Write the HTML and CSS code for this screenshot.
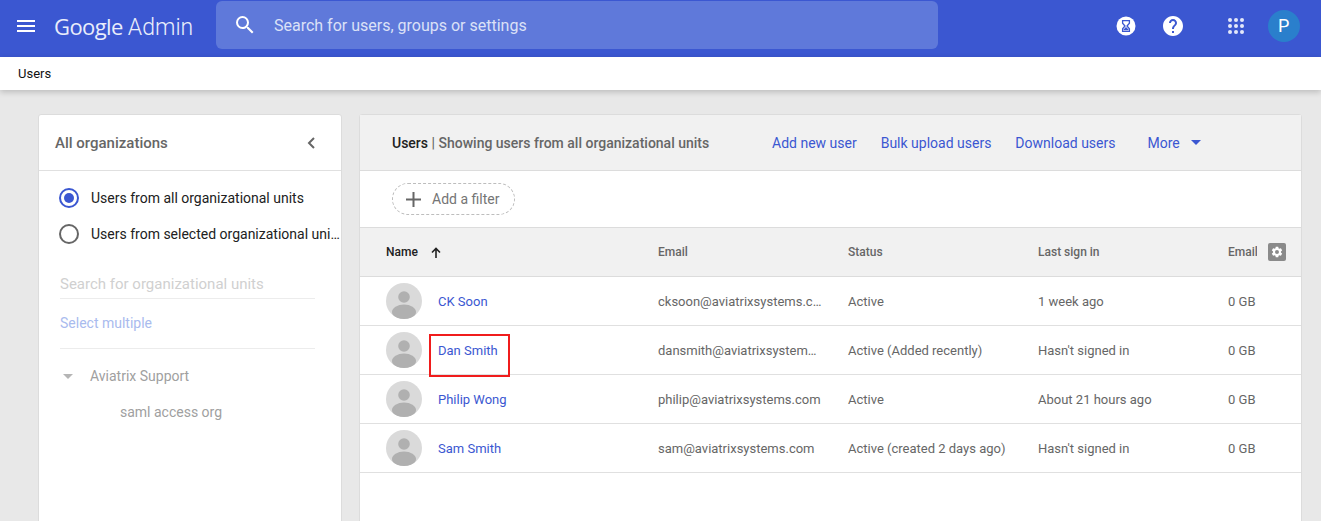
FILE: index.html
```html
<!DOCTYPE html>
<html>
<head>
    <title>Users - Admin</title>
    <link rel="stylesheet" href="styles.css">
</head>
<body>
    <header class="topbar">
        <svg class="menu-icon" viewBox="0 0 18 12" width="18" height="12"><path d="M0 0h18v2H0zM0 5h18v2H0zM0 10h18v2H0z" fill="#fff"/></svg>
        <div class="logo"><span class="logo-google">Google</span> <span class="logo-admin">Admin</span></div>
        <div class="search">
            <svg class="search-icon" viewBox="0 0 24 24" width="24" height="24"><path d="M15.5 14h-.79l-.28-.27A6.47 6.47 0 0 0 16 9.5 6.5 6.5 0 1 0 9.5 16c1.61 0 3.09-.59 4.23-1.57l.27.28v.79l5 4.99L20.49 19l-4.99-5zm-6 0C7.01 14 5 11.99 5 9.5S7.01 5 9.5 5 14 7.01 14 9.5 11.99 14 9.5 14z" fill="#fff"/></svg>
            <span class="search-text">Search for users, groups or settings</span>
        </div>
        <div class="top-icons">
            <svg class="icon-timer" viewBox="0 0 20 20" width="20" height="20"><circle cx="10" cy="10" r="9.5" fill="#fff"/><path d="M6.6 4.6h6.8v2.6L11 10l2.4 2.8v2.6H6.6v-2.6L9 10 6.6 7.2z" fill="none" stroke="#3b57d1" stroke-width="1.3"/><path d="M7.8 14.3h4.4v-1L10 11l-2.2 2.3z" fill="#3b57d1"/></svg>
            <svg class="icon-help" viewBox="0 0 24 24" width="24" height="24"><path d="M12 2C6.48 2 2 6.48 2 12s4.48 10 10 10 10-4.48 10-10S17.52 2 12 2zm1 17h-2v-2h2v2zm2.07-7.75l-.9.92C13.45 12.9 13 13.5 13 15h-2v-.5c0-1.1.45-2.1 1.17-2.83l1.24-1.26c.37-.36.59-.86.59-1.41 0-1.1-.9-2-2-2s-2 .9-2 2H8c0-2.21 1.79-4 4-4s4 1.79 4 4c0 .88-.36 1.68-.93 2.25z" fill="#fff"/></svg>
            <svg class="icon-apps" viewBox="0 0 16 16" width="16" height="16" fill="#e3e8fa"><circle cx="2" cy="2" r="2"/><circle cx="8" cy="2" r="2"/><circle cx="14" cy="2" r="2"/><circle cx="2" cy="8" r="2"/><circle cx="8" cy="8" r="2"/><circle cx="14" cy="8" r="2"/><circle cx="2" cy="14" r="2"/><circle cx="8" cy="14" r="2"/><circle cx="14" cy="14" r="2"/></svg>
            <div class="avatar-top">P</div>
        </div>
    </header>

    <div class="subbar">Users</div>

    <div class="content">
        <aside class="sidebar">
            <div class="sidebar-head">
                <span>All organizations</span>
                <svg viewBox="0 0 8 12" width="8" height="12"><path d="M7 1L2 6l5 5" fill="none" stroke="#666" stroke-width="2"/></svg>
            </div>
            <div class="sidebar-body">
                <div class="radio-row"><span class="radio radio-on"></span><span class="radio-label">Users from all organizational units</span></div>
                <div class="radio-row"><span class="radio"></span><span class="radio-label">Users from selected organizational units</span></div>
                <div class="org-search">Search for organizational units</div>
                <div class="select-multiple">Select multiple</div>
                <div class="org-item"><span class="org-arrow"></span>Aviatrix Support</div>
                <div class="org-child">saml access org</div>
            </div>
        </aside>

        <main class="panel">
            <div class="panel-head">
                <div class="panel-title"><b>Users</b> | Showing users from all organizational units</div>
                <a class="action">Add new user</a>
                <a class="action">Bulk upload users</a>
                <a class="action">Download users</a>
                <a class="action action-more">More<span class="more-arrow"></span></a>
            </div>
            <div class="filter-row">
                <div class="filter-chip">
                    <svg viewBox="0 0 15 15" width="15" height="15"><path d="M6.5 0h2v6.5H15v2H8.5V15h-2V8.5H0v-2h6.5z" fill="#666"/></svg>
                    <span>Add a filter</span>
                </div>
            </div>
            <table class="users">
                <thead>
                    <tr>
                        <th class="col-name">
                            <span class="name-head">Name</span>
                            <svg viewBox="0 0 12 12" width="12" height="12"><path d="M6 11V2M2 5.5L6 1.5l4 4" fill="none" stroke="#222" stroke-width="1.6"/></svg>
                        </th>
                        <th class="col-email">Email</th>
                        <th class="col-status">Status</th>
                        <th class="col-signin">Last sign in</th>
                        <th class="col-usage">
                            <div class="usage-head">
                                <span class="usage-label">Email</span>
                                <svg class="gear" viewBox="0 0 18 18" width="18" height="18"><rect width="18" height="18" rx="2" fill="#8a8a8a"/><path transform="translate(2.4 2.4) scale(.55)" d="M19.14 12.94c.04-.3.06-.61.06-.94 0-.32-.02-.64-.07-.94l2.03-1.58a.49.49 0 0 0 .12-.61l-1.92-3.32a.49.49 0 0 0-.59-.22l-2.39.96c-.5-.38-1.03-.7-1.62-.94l-.36-2.54a.48.48 0 0 0-.48-.41h-3.84c-.24 0-.43.17-.47.41l-.36 2.54c-.59.24-1.13.57-1.62.94l-2.39-.96c-.22-.08-.47 0-.59.22L2.74 8.87c-.12.21-.08.47.12.61l2.03 1.58c-.05.3-.09.63-.09.94s.02.64.07.94l-2.03 1.58a.49.49 0 0 0-.12.61l1.92 3.32c.12.22.37.29.59.22l2.39-.96c.5.38 1.03.7 1.62.94l.36 2.54c.05.24.24.41.48.41h3.84c.24 0 .44-.17.47-.41l.36-2.54c.59-.24 1.13-.56 1.62-.94l2.39.96c.22.08.47 0 .59-.22l1.92-3.32c.12-.22.07-.47-.12-.61l-2.01-1.58zM12 15.6A3.6 3.6 0 1 1 12 8.4a3.6 3.6 0 0 1 0 7.2z" fill="#fff"/></svg>
                            </div>
                        </th>
                    </tr>
                </thead>
                <tbody>
                    <tr>
                        <td class="col-name"><div class="user"><svg class="user-pic" viewBox="0 0 36 36" width="36" height="36"><defs><clipPath id="round"><circle cx="18" cy="18" r="18"/></clipPath></defs><circle cx="18" cy="18" r="18" fill="#dadada"/><circle cx="18" cy="14" r="5.8" fill="#b0b0b0"/><ellipse cx="18" cy="29" rx="12" ry="7.5" fill="#b0b0b0" clip-path="url(#round)"/></svg><a class="user-link">CK Soon</a></div></td>
                        <td><div class="clip">cksoon@aviatrixsystems.com</div></td>
                        <td>Active</td>
                        <td>1 week ago</td>
                        <td>0 GB</td>
                    </tr>
                    <tr>
                        <td class="col-name"><div class="user"><svg class="user-pic" viewBox="0 0 36 36" width="36" height="36"><circle cx="18" cy="18" r="18" fill="#dadada"/><circle cx="18" cy="14" r="5.8" fill="#b0b0b0"/><ellipse cx="18" cy="29" rx="12" ry="7.5" fill="#b0b0b0" clip-path="url(#round)"/></svg><a class="user-link">Dan Smith</a><span class="red-box"></span></div></td>
                        <td><div class="clip">dansmith@aviatrixsystems.com</div></td>
                        <td>Active (Added recently)</td>
                        <td>Hasn't signed in</td>
                        <td>0 GB</td>
                    </tr>
                    <tr>
                        <td class="col-name"><div class="user"><svg class="user-pic" viewBox="0 0 36 36" width="36" height="36"><circle cx="18" cy="18" r="18" fill="#dadada"/><circle cx="18" cy="14" r="5.8" fill="#b0b0b0"/><ellipse cx="18" cy="29" rx="12" ry="7.5" fill="#b0b0b0" clip-path="url(#round)"/></svg><a class="user-link">Philip Wong</a></div></td>
                        <td><div class="clip">philip@aviatrixsystems.com</div></td>
                        <td>Active</td>
                        <td>About 21 hours ago</td>
                        <td>0 GB</td>
                    </tr>
                    <tr>
                        <td class="col-name"><div class="user"><svg class="user-pic" viewBox="0 0 36 36" width="36" height="36"><circle cx="18" cy="18" r="18" fill="#dadada"/><circle cx="18" cy="14" r="5.8" fill="#b0b0b0"/><ellipse cx="18" cy="29" rx="12" ry="7.5" fill="#b0b0b0" clip-path="url(#round)"/></svg><a class="user-link">Sam Smith</a></div></td>
                        <td><div class="clip">sam@aviatrixsystems.com</div></td>
                        <td>Active (created 2 days ago)</td>
                        <td>Hasn't signed in</td>
                        <td>0 GB</td>
                    </tr>
                </tbody>
            </table>
        </main>
    </div>
</body>
</html>
```

FILE: styles.css
```css
html, body {
    height: 521px;
    overflow: hidden;
}

body {
    margin: 0;
    background-color: #e8e8e8;
    font-family: Roboto, "Liberation Sans", sans-serif;
    font-size: 13px;
    color: #212121;
}

.topbar {
    height: 57px;
    background-color: #3b57d1;
    display: flex;
    align-items: center;
    padding-left: 17px;
    overflow: hidden;
}

.menu-icon {
    flex: none;
    margin-top: -6px;
}

.logo {
    margin-left: 19px;
    width: 162px;
    margin-top: -6px;
    font-family: "Open Sans", sans-serif;
    font-size: 22px;
    color: #e9edfb;
    white-space: nowrap;
    letter-spacing: -0.6px;
}

.logo-admin {
    font-family: Roboto, sans-serif;
    font-weight: 300;
    letter-spacing: 0;
    font-size: 23px;
}

.search {
    width: 722px;
    height: 48px;
    margin-top: -7px;
    background-color: #5f79da;
    border-radius: 6px;
    display: flex;
    align-items: center;
    padding-left: 17px;
    box-sizing: border-box;
}

.search-text {
    margin-left: 17px;
    font-size: 16px;
    color: #dbe1f7;
}

.top-icons {
    margin-left: 178px;
    display: flex;
    align-items: center;
    margin-top: -6px;
}

.icon-help {
    margin-left: 25px;
}

.icon-apps {
    margin-left: 43px;
}

.avatar-top {
    flex: none;
    width: 32px;
    height: 32px;
    margin-left: 24px;
    border-radius: 50%;
    background-color: #2a7fcc;
    color: #fff;
    font-size: 18px;
    line-height: 32px;
    padding-left: 10px;
    box-sizing: border-box;
}

.subbar {
    height: 33px;
    line-height: 33px;
    background-color: #fff;
    padding-left: 18px;
    color: #111;
    box-shadow: 0 2px 6px rgba(0, 0, 0, 0.2);
    position: relative;
}

.content {
    display: flex;
    align-items: flex-start;
    gap: 17px;
    padding: 24px 19px 0 38px;
}

.sidebar {
    width: 304px;
    height: 420px;
    flex: none;
    background-color: #fff;
    border: 1px solid #dcdcdc;
    border-radius: 3px;
    box-sizing: border-box;
}

.sidebar-head {
    height: 56px;
    padding: 0 26px 0 16px;
    display: flex;
    align-items: center;
    justify-content: space-between;
    border-bottom: 1px solid #e0e0e0;
    font-size: 15px;
    font-weight: 500;
    color: #666;
    box-sizing: border-box;
}

.sidebar-body {
    padding: 9px 0 0 20px;
}

.radio-row {
    height: 36px;
    display: flex;
    align-items: center;
}

.radio {
    width: 20px;
    height: 20px;
    flex: none;
    border: 2px solid #666;
    border-radius: 50%;
    box-sizing: border-box;
    position: relative;
}

.radio-on {
    border-color: #3b57d1;
}

.radio-on::after {
    content: "";
    position: absolute;
    top: 3px;
    left: 3px;
    width: 10px;
    height: 10px;
    border-radius: 50%;
    background-color: #3b57d1;
}

.radio-label {
    margin-left: 12px;
    width: 250px;
    white-space: nowrap;
    overflow: hidden;
    text-overflow: ellipsis;
    font-size: 14px;
    color: #212121;
}

.org-search {
    width: 255px;
    margin: 22px 0 0 1px;
    padding-bottom: 4px;
    border-bottom: 1px solid #ececec;
    font-size: 15px;
    line-height: 20px;
    color: #d0d0d0;
}

.select-multiple {
    width: 255px;
    margin-left: 1px;
    padding: 16px 0 17px;
    border-bottom: 1px solid #ececec;
    font-size: 14px;
    line-height: 16px;
    color: #a9bbee;
}

.org-item {
    display: flex;
    align-items: center;
    margin-top: 18px;
    font-size: 14px;
    line-height: 18px;
    color: #a0a0a0;
}

.org-arrow {
    width: 0;
    height: 0;
    margin: 0 17px 0 4px;
    border-left: 5px solid transparent;
    border-right: 5px solid transparent;
    border-top: 5px solid #b5b5b5;
}

.org-child {
    margin: 18px 0 0 61px;
    font-size: 14px;
    line-height: 18px;
    color: #a0a0a0;
}

.panel {
    flex: 1;
    height: 420px;
    background-color: #fff;
    border: 1px solid #dcdcdc;
    border-radius: 3px;
    box-sizing: border-box;
}

.panel-head {
    height: 56px;
    display: flex;
    align-items: center;
    padding-left: 32px;
    background-color: #f1f1f1;
    border-bottom: 1px solid #dcdcdc;
    box-sizing: border-box;
}

.panel-title {
    width: 380px;
    font-size: 14px;
    font-weight: 500;
    color: #666;
}

.panel-title b {
    font-weight: 500;
    color: #212121;
}

.action {
    margin-right: 24px;
    font-size: 14px;
    color: #3b57d1;
}

.action-more {
    margin-left: 8px;
    display: flex;
    align-items: center;
}

.more-arrow {
    margin-left: 11px;
    width: 0;
    height: 0;
    border-left: 5px solid transparent;
    border-right: 5px solid transparent;
    border-top: 5px solid #3b57d1;
}

.filter-row {
    height: 56px;
    display: flex;
    align-items: center;
    padding-left: 32px;
    box-sizing: border-box;
}

.filter-chip {
    display: flex;
    align-items: center;
    gap: 11px;
    width: 123px;
    height: 32px;
    padding-left: 13px;
    border: 1px dashed #bdbdbd;
    border-radius: 16px;
    box-sizing: border-box;
    font-size: 14px;
    color: #757575;
}

.users {
    width: 100%;
    border-collapse: collapse;
    table-layout: fixed;
}

.users th {
    height: 49px;
    padding: 0;
    background-color: #f1f1f1;
    border-top: 1px solid #dcdcdc;
    border-bottom: 1px solid #dcdcdc;
    text-align: left;
    font-size: 12px;
    font-weight: 500;
    color: #666;
    box-sizing: border-box;
}

.users td {
    height: 49px;
    padding: 0;
    border-bottom: 1px solid #e0e0e0;
    color: #666;
    box-sizing: border-box;
}

.users .col-name {
    width: 298px;
    padding-left: 26px;
    box-sizing: border-box;
}

.col-email, .col-status, .col-signin {
    width: 190px;
}

.name-head {
    margin-right: 9px;
    color: #212121;
}

.users th svg {
    vertical-align: middle;
}

.usage-head {
    display: flex;
    align-items: center;
}

.usage-label {
    width: 29px;
    overflow: hidden;
    margin-right: 11px;
}

.clip {
    width: 165px;
    white-space: nowrap;
    overflow: hidden;
    text-overflow: ellipsis;
}

.user {
    display: flex;
    align-items: center;
    position: relative;
}

.user-pic {
    flex: none;
}

.user-link {
    margin-left: 16px;
    color: #3b57d1;
}

.red-box {
    position: absolute;
    left: 43px;
    top: 2px;
    width: 81px;
    height: 43px;
    border: 2px solid #f01c1c;
    box-sizing: border-box;
}
```
